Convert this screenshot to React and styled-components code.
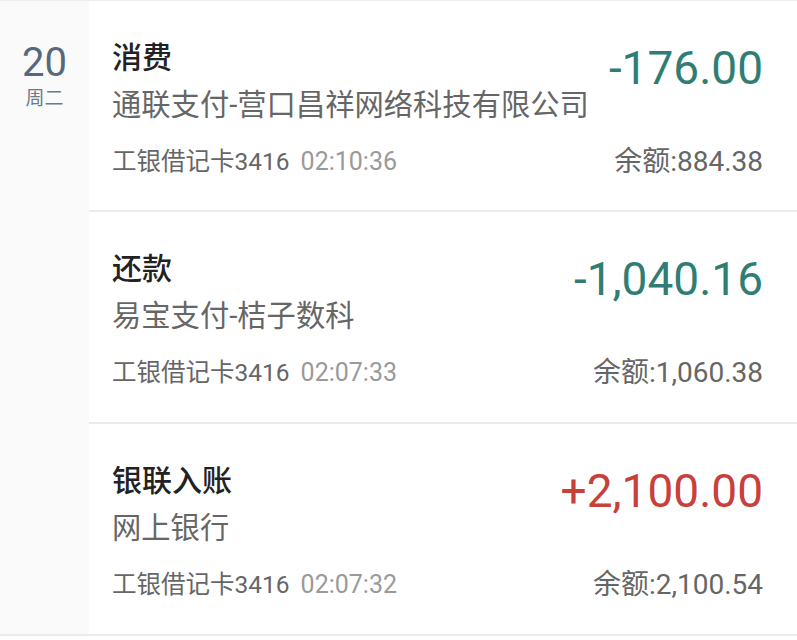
import React from "react";
import styled, { createGlobalStyle } from "styled-components";

const GlobalStyle = createGlobalStyle`
  html, body { margin: 0; padding: 0; background: #ffffff; }
  body {
    font-family: Roboto, "Noto Sans CJK SC", "Noto Sans", sans-serif;
    -webkit-font-smoothing: antialiased;
  }
`;

const DayGroup = styled.section`
  display: grid;
  grid-template-columns: 89px 1fr;
  border-top: 1px solid #ededed;
  border-bottom: 2px solid #ebebeb;
  background: #ffffff;
`;

const DateColumn = styled.div`
  background: #fafafa;
  display: flex;
  flex-direction: column;
  align-items: center;
  padding-top: 39px;
`;

const DayNumber = styled.div`
  font-size: 40px;
  line-height: 46px;
  color: #56697a;
  font-weight: 400;
`;

const Weekday = styled.div`
  font-size: 19px;
  line-height: 24px;
  margin-top: 1px;
  color: #6b7b89;
`;

const List = styled.div`
  display: flex;
  flex-direction: column;
`;

const Card = styled.article`
  display: flex;
  flex-direction: column;
  height: ${(p) => (p.$first ? "209px" : "212px")};
  box-sizing: border-box;
  padding: 37px 34px 0 23px;
  border-top: ${(p) => (p.$first ? "none" : "2px solid #ebebeb")};
`;

const TopRow = styled.div`
  display: flex;
  justify-content: space-between;
  align-items: flex-start;
`;

const Info = styled.div`
  display: flex;
  flex-direction: column;
`;

const Title = styled.div`
  font-size: 30px;
  line-height: 40px;
  color: #222222;
  font-weight: 500;
`;

const Subtitle = styled.div`
  font-size: 29.3px;
  line-height: 40px;
  margin-top: 7px;
  color: #666666;
  white-space: nowrap;
`;

const Amount = styled.div`
  font-size: 46px;
  line-height: 56px;
  margin-top: 2px;
  color: ${(p) => (p.$income ? "#c8403a" : "#2f7d73")};
  white-space: nowrap;
`;

const BottomRow = styled.div`
  display: flex;
  justify-content: space-between;
  align-items: center;
  margin-top: 21px;
`;

const Meta = styled.div`
  font-size: 24.5px;
  line-height: 32px;
  color: #666666;
  white-space: nowrap;
`;

const Time = styled.span`
  font-size: 25px;
  color: #9a9a9a;
  margin-left: 11px;
`;

const Balance = styled.div`
  font-size: 28px;
  line-height: 32px;
  color: #666666;
  white-space: nowrap;
`;

const records = [
  {
    title: "消费",
    desc: "通联支付-营口昌祥网络科技有限公司",
    card: "工银借记卡3416",
    time: "02:10:36",
    amount: "-176.00",
    balance: "884.38",
    income: false,
  },
  {
    title: "还款",
    desc: "易宝支付-桔子数科",
    card: "工银借记卡3416",
    time: "02:07:33",
    amount: "-1,040.16",
    balance: "1,060.38",
    income: false,
  },
  {
    title: "银联入账",
    desc: "网上银行",
    card: "工银借记卡3416",
    time: "02:07:32",
    amount: "+2,100.00",
    balance: "2,100.54",
    income: true,
  },
];

export default function App() {
  return (
    <>
      <GlobalStyle />
      <DayGroup>
        <DateColumn>
          <DayNumber>20</DayNumber>
          <Weekday>周二</Weekday>
        </DateColumn>
        <List>
          {records.map((r, i) => (
            <Card key={i} $first={i === 0}>
              <TopRow>
                <Info>
                  <Title>{r.title}</Title>
                  <Subtitle>{r.desc}</Subtitle>
                </Info>
                <Amount $income={r.income}>{r.amount}</Amount>
              </TopRow>
              <BottomRow>
                <Meta>
                  {r.card}
                  <Time>{r.time}</Time>
                </Meta>
                <Balance>余额:{r.balance}</Balance>
              </BottomRow>
            </Card>
          ))}
        </List>
      </DayGroup>
    </>
  );
}
